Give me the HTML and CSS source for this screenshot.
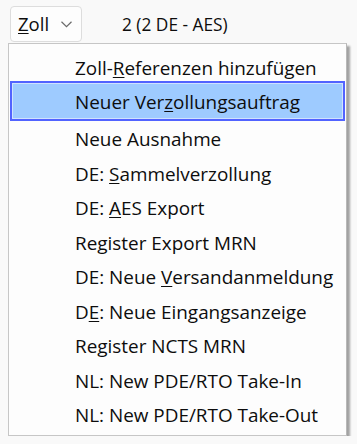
FILE: index.html
```html
<!DOCTYPE html>
<html lang="de">
<head>
<meta charset="utf-8">
<link rel="stylesheet" href="styles.css">
</head>
<body>
<div class="topbar">
  <div class="dropbtn">
    <span class="btn-label"><u>Z</u>oll</span>
    <svg class="chev" width="11" height="7" viewBox="0 0 11 7"><path d="M0.5 0.8 L5.5 5.6 L10.5 0.8" fill="none" stroke="#6a6a6a" stroke-width="1.2"/></svg>
  </div>
  <div class="count">2 (2 DE - AES)</div>
</div>
<div class="menu">
  <div class="item">Zoll-<u>R</u>eferenzen hinzufügen</div>
  <div class="item active">Neuer Ver<u>z</u>ollungsauftrag</div>
  <div class="item">Neue Ausnahme</div>
  <div class="item">DE: <u>S</u>ammelverzollung</div>
  <div class="item">DE: <u>A</u>ES Export</div>
  <div class="item">Register Export MRN</div>
  <div class="item">DE: Neue <u>V</u>ersandanmeldung</div>
  <div class="item">D<u>E</u>: Neue Eingangsanzeige</div>
  <div class="item">Register NCTS MRN</div>
  <div class="item">NL: New PDE/RTO Take-In</div>
  <div class="item">NL: New PDE/RTO Take-Out</div>
</div>
</body>
</html>
```
FILE: styles.css
```css
html, body {
  margin: 0;
  padding: 0;
  background: #f9f9f9;
}
body {
  font-family: "Open Sans", "Noto Sans", sans-serif;
  font-size: 17px;
  color: #0d0d0d;
}
u {
  text-decoration-thickness: 1px;
  text-underline-offset: 2px;
}
.topbar {
  display: flex;
  align-items: center;
  padding: 6px 0 0 10px;
  height: 36px;
}
.dropbtn {
  box-sizing: border-box;
  width: 72px;
  height: 36px;
  border: 1px solid #dddddd;
  border-radius: 4px;
  background: #fdfdfd;
  display: flex;
  align-items: center;
  padding-left: 7px;
  gap: 12px;
}
.btn-label {
  font-size: 18.5px;
  line-height: 20px;
}
.chev {
  margin-top: 1px;
}
.count {
  margin-left: 40px;
  font-size: 17.3px;
}
.menu {
  box-sizing: border-box;
  margin: 1px 0 0 8px;
  width: 339px;
  height: 393px;
  border: 1px solid #c6c6c6;
  border-right-color: #b8b8b8;
  background: #fdfdfd;
  padding: 7px 1px 3px 1px;
  box-shadow: 3px 3px 2px rgba(0, 0, 0, 0.35);
}
.item {
  height: 34.5px;
  line-height: 34.5px;
  padding-left: 65px;
  white-space: nowrap;
  font-size: 18.9px;
}
.item:first-child {
  height: 34.7px;
  line-height: 34.7px;
}
.item.active {
  box-sizing: border-box;
  margin-top: -5px;
  height: 40.5px;
  line-height: 34.7px;
  padding-top: 2px;
  padding-left: 63px;
  border: 2px solid #5263ff;
  background: #9ecbff;
  box-shadow: inset 0 0 0 1px #cfe2ff;
}
.item.active + .item {
  margin-top: 1px;
}
```
